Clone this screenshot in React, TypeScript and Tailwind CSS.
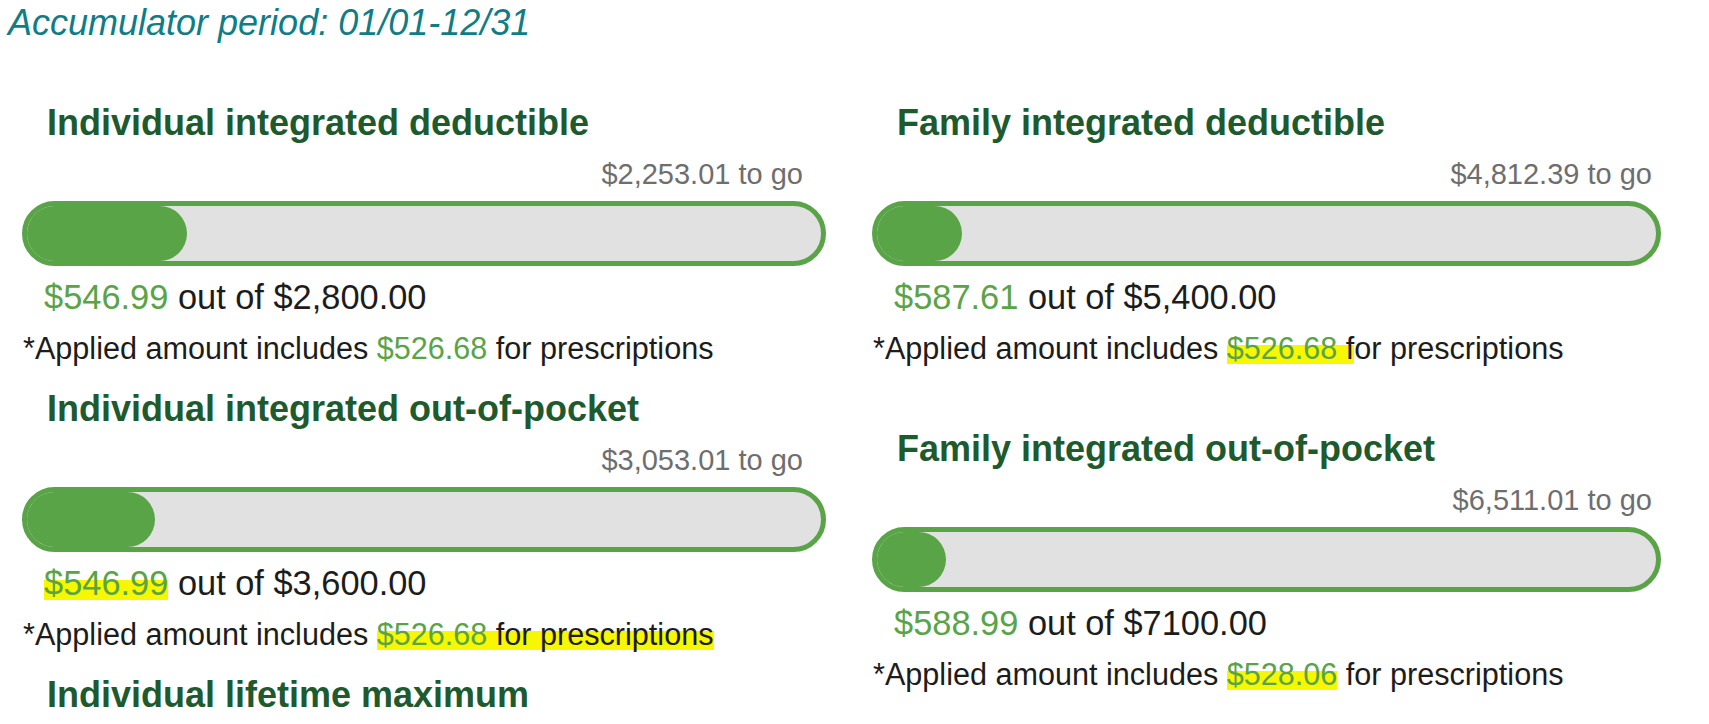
import type { ReactNode } from 'react';

type Accumulator = {
  title: string;
  remaining: string;
  applied: ReactNode;
  limit: string;
  rx: ReactNode;
  fill: number;
};

const marker =
  'bg-[linear-gradient(to_bottom,transparent_42%,#f7f700_42%,#f7f700_96%,transparent_96%)]';

const individual: Accumulator[] = [
  {
    title: 'Individual integrated deductible',
    remaining: '$2,253.01',
    applied: '$546.99',
    limit: '$2,800.00',
    rx: (
      <>
        <span className="text-[#59a447]">$526.68</span> for prescriptions
      </>
    ),
    fill: 160,
  },
  {
    title: 'Individual integrated out-of-pocket',
    remaining: '$3,053.01',
    applied: <span className={marker}>$546.99</span>,
    limit: '$3,600.00',
    rx: (
      <span className={marker}>
        <span className="text-[#59a447]">$526.68</span> for prescriptions
      </span>
    ),
    fill: 128,
  },
];

const family: Accumulator[] = [
  {
    title: 'Family integrated deductible',
    remaining: '$4,812.39',
    applied: '$587.61',
    limit: '$5,400.00',
    rx: (
      <>
        <span className={marker}>
          <span className="text-[#59a447]">$526.68</span> f
        </span>
        or prescriptions
      </>
    ),
    fill: 85,
  },
  {
    title: 'Family integrated out-of-pocket',
    remaining: '$6,511.01',
    applied: '$588.99',
    limit: '$7100.00',
    rx: (
      <>
        <span className={`text-[#59a447] ${marker}`}>$528.06</span> for prescriptions
      </>
    ),
    fill: 69,
  },
];

function ProgressBar({ fill }: { fill: number }) {
  return (
    <div className="h-[65px] rounded-full border-[5px] border-[#59a447] bg-[#e1e1e1]">
      <div className="h-full rounded-full bg-[#59a447]" style={{ width: fill }} />
    </div>
  );
}

function AccumulatorBlock({ item, goPad }: { item: Accumulator; goPad: string }) {
  return (
    <div className="flex flex-col">
      <h2 className="pl-[25px] text-[36px] font-bold leading-[42px] text-[#1d5a2e]">{item.title}</h2>
      <div className={`mt-[13px] text-right text-[29px] leading-[34px] text-[#6e6e6e] ${goPad}`}>
        {item.remaining} to go
      </div>
      <div className="mt-[10px]">
        <ProgressBar fill={item.fill} />
      </div>
      <div className="mt-[11px] pl-[22px] text-[34.4px] leading-[40px] text-[#1c1c1c]">
        <span className="text-[#59a447]">{item.applied}</span> out of {item.limit}
      </div>
      <div className="mt-[13px] pl-[1px] text-[30.6px] leading-[36px] text-[#1c1c1c]">
        *Applied amount includes {item.rx}
      </div>
    </div>
  );
}

export default function App() {
  return (
    <div className="h-[724px] w-[1709px] overflow-hidden bg-white font-['Liberation_Sans',Arial,sans-serif]">
      <div className="pl-[8px] pt-[2px] text-[36px] italic leading-[42px] text-[#0e7d86]">
        Accumulator period: 01/01-12/31
      </div>

      <div className="mt-[58px] flex gap-[46px] pl-[22px]">
        <div className="flex w-[804px] flex-col gap-[22px]">
          {individual.map((item) => (
            <AccumulatorBlock key={item.title} item={item} goPad="pr-[23px]" />
          ))}
          <h2 className="pl-[25px] text-[36px] font-bold leading-[42px] text-[#1d5a2e]">
            Individual lifetime maximum
          </h2>
        </div>

        <div className="flex w-[789px] flex-col gap-[62px]">
          {family.map((item) => (
            <AccumulatorBlock key={item.title} item={item} goPad="pr-[9px]" />
          ))}
        </div>
      </div>
    </div>
  );
}
